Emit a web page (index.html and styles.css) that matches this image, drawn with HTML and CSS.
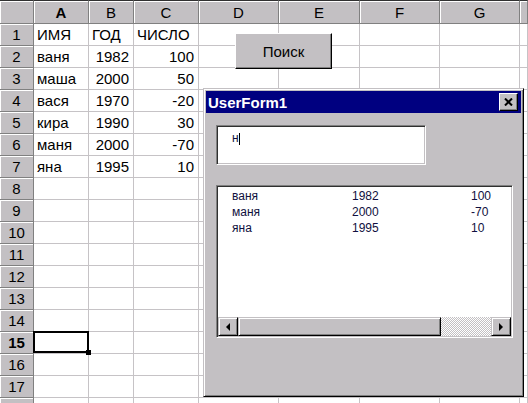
FILE: index.html
```html
<!DOCTYPE html>
<html>
<head>
<meta charset="utf-8">
<link rel="stylesheet" href="styles.css">
</head>
<body>
<div class="sheet">
  <div class="h corner"></div><div class="h col sel">A</div><div class="h col">B</div><div class="h col">C</div><div class="h col">D</div><div class="h col">E</div><div class="h col">F</div><div class="h col">G</div><div class="h col"></div>

  <div class="h rh">1</div><div class="c">ИМЯ</div><div class="c">ГОД</div><div class="c">ЧИСЛО</div><div class="c"></div><div class="c"></div><div class="c"></div><div class="c"></div><div class="c"></div>
  <div class="h rh">2</div><div class="c">ваня</div><div class="c n">1982</div><div class="c n">100</div><div class="c"></div><div class="c"></div><div class="c"></div><div class="c"></div><div class="c"></div>
  <div class="h rh">3</div><div class="c">маша</div><div class="c n">2000</div><div class="c n">50</div><div class="c"></div><div class="c"></div><div class="c"></div><div class="c"></div><div class="c"></div>
  <div class="h rh">4</div><div class="c">вася</div><div class="c n">1970</div><div class="c n">-20</div><div class="c"></div><div class="c"></div><div class="c"></div><div class="c"></div><div class="c"></div>
  <div class="h rh">5</div><div class="c">кира</div><div class="c n">1990</div><div class="c n">30</div><div class="c"></div><div class="c"></div><div class="c"></div><div class="c"></div><div class="c"></div>
  <div class="h rh">6</div><div class="c">маня</div><div class="c n">2000</div><div class="c n">-70</div><div class="c"></div><div class="c"></div><div class="c"></div><div class="c"></div><div class="c"></div>
  <div class="h rh">7</div><div class="c">яна</div><div class="c n">1995</div><div class="c n">10</div><div class="c"></div><div class="c"></div><div class="c"></div><div class="c"></div><div class="c"></div>
  <div class="h rh">8</div><div class="c"></div><div class="c"></div><div class="c"></div><div class="c"></div><div class="c"></div><div class="c"></div><div class="c"></div><div class="c"></div>
  <div class="h rh">9</div><div class="c"></div><div class="c"></div><div class="c"></div><div class="c"></div><div class="c"></div><div class="c"></div><div class="c"></div><div class="c"></div>
  <div class="h rh">10</div><div class="c"></div><div class="c"></div><div class="c"></div><div class="c"></div><div class="c"></div><div class="c"></div><div class="c"></div><div class="c"></div>
  <div class="h rh">11</div><div class="c"></div><div class="c"></div><div class="c"></div><div class="c"></div><div class="c"></div><div class="c"></div><div class="c"></div><div class="c"></div>
  <div class="h rh">12</div><div class="c"></div><div class="c"></div><div class="c"></div><div class="c"></div><div class="c"></div><div class="c"></div><div class="c"></div><div class="c"></div>
  <div class="h rh">13</div><div class="c"></div><div class="c"></div><div class="c"></div><div class="c"></div><div class="c"></div><div class="c"></div><div class="c"></div><div class="c"></div>
  <div class="h rh">14</div><div class="c"></div><div class="c"></div><div class="c"></div><div class="c"></div><div class="c"></div><div class="c"></div><div class="c"></div><div class="c"></div>
  <div class="h rh sel">15</div><div class="c active"><span class="handle"></span></div><div class="c"></div><div class="c"></div><div class="c"></div><div class="c"></div><div class="c"></div><div class="c"></div><div class="c"></div>
  <div class="h rh">16</div><div class="c"></div><div class="c"></div><div class="c"></div><div class="c"></div><div class="c"></div><div class="c"></div><div class="c"></div><div class="c"></div>
  <div class="h rh">17</div><div class="c"></div><div class="c"></div><div class="c"></div><div class="c"></div><div class="c"></div><div class="c"></div><div class="c"></div><div class="c"></div>
  <div class="h rh"></div><div class="c"></div><div class="c"></div><div class="c"></div><div class="c"></div><div class="c"></div><div class="c"></div><div class="c"></div><div class="c"></div>
</div>

<button class="search-btn">Поиск</button>

<div class="form">
  <div class="titlebar">
    <span class="title">UserForm1</span>
    <span class="close">
      <svg width="9" height="8" viewBox="0 0 9 8"><path d="M1 0.5 L8 7.5 M8 0.5 L1 7.5" stroke="#000" stroke-width="2" fill="none"/></svg>
    </span>
  </div>
  <div class="client">
    <div class="textbox">н<span class="caret"></span></div>
    <div class="listbox">
      <div class="items">
        <div class="item"><span>ваня</span><span>1982</span><span>100</span></div>
        <div class="item"><span>маня</span><span>2000</span><span>-70</span></div>
        <div class="item"><span>яна</span><span>1995</span><span>10</span></div>
      </div>
      <div class="hscroll">
        <div class="sbtn"><span class="arr-left"></span></div>
        <div class="thumb"></div>
        <div class="track"></div>
        <div class="sbtn"><span class="arr-right"></span></div>
      </div>
    </div>
  </div>
</div>
</body>
</html>
```

FILE: styles.css
```css
* { box-sizing: border-box; }

body {
  margin: 0;
  width: 528px;
  height: 403px;
  overflow: hidden;
  position: relative;
  background: #fff;
  font-family: "Liberation Sans", Arial, sans-serif;
  color: #000;
}

.sheet {
  display: grid;
  grid-template-columns: 34px 55px 45px 65px 80px 81px 80px 80px 8px;
  grid-template-rows: 24px;
  grid-auto-rows: 22px;
}

.h {
  background: #c3c0c3;
  border-right: 1px solid #808080;
  border-bottom: 1px solid #808080;
  box-shadow: inset 1px 1px #fff;
  display: flex;
  align-items: center;
  justify-content: center;
  font-size: 15px;
}

.corner, .col { border-top: 1px solid #303030; }

.sel { font-weight: bold; }

.c {
  border-right: 1px solid #c6c3c6;
  border-bottom: 1px solid #c6c3c6;
  font-size: 15px;
  padding: 0 3px;
  display: flex;
  align-items: center;
  white-space: nowrap;
}

.n {
  justify-content: flex-end;
  padding-right: 4px;
}

.active { position: relative; }

.active::before {
  content: "";
  position: absolute;
  left: -1px;
  top: -1px;
  right: -1px;
  bottom: 0;
  border: 2px solid #000;
}

.handle {
  position: absolute;
  right: -3px;
  bottom: -2px;
  width: 5px;
  height: 5px;
  background: #000;
}

.search-btn {
  position: absolute;
  left: 235px;
  top: 33px;
  width: 97px;
  height: 36px;
  margin: 0;
  padding: 0;
  background: #c3c0c3;
  border: 1px solid;
  border-color: #fff #000 #000 #fff;
  box-shadow: inset -1px -1px #808080;
  font-family: "Liberation Sans", Arial, sans-serif;
  font-size: 15px;
  color: #000;
}

.form {
  position: absolute;
  left: 203px;
  top: 88px;
  width: 321px;
  height: 309px;
  background: #c3c0c3;
  border: 1px solid;
  border-color: #c3c0c3 #000 #000 #c3c0c3;
  box-shadow: inset 1px 1px #fff, inset -1px -1px #808080;
  padding: 2px;
  display: flex;
  flex-direction: column;
}

.titlebar {
  height: 22px;
  background: #000080;
  color: #fff;
  display: flex;
  align-items: center;
  justify-content: space-between;
  padding: 0 3px 0 2px;
}

.title {
  font-weight: bold;
  font-size: 15px;
}

.close {
  width: 19px;
  height: 18px;
  background: #c3c0c3;
  border: 1px solid;
  border-color: #fff #000 #000 #fff;
  box-shadow: inset -1px -1px #808080;
  display: flex;
  align-items: center;
  justify-content: center;
}

.client {
  flex: 1;
  display: flex;
  flex-direction: column;
  padding: 12px 0 0 10px;
}

.textbox {
  width: 210px;
  height: 40px;
  background: #fff;
  border: 1px solid;
  border-color: #808080 #fff #fff #808080;
  box-shadow: inset 1px 1px #303030, inset -1px -1px #c3c0c3;
  padding: 5px 0 0 15px;
  font-size: 12px;
  line-height: 14px;
  color: #101040;
}

.caret {
  display: inline-block;
  width: 1px;
  height: 12px;
  background: #000;
  vertical-align: -3px;
}

.listbox {
  margin-top: 20px;
  width: 297px;
  height: 153px;
  background: #fff;
  border: 1px solid;
  border-color: #808080 #fff #fff #808080;
  box-shadow: inset 1px 1px #303030, inset -1px -1px #c3c0c3;
  padding: 1px;
  display: flex;
  flex-direction: column;
}

.items {
  flex: 1;
  padding: 1px 0 0 14px;
  font-size: 12px;
  line-height: 16px;
  color: #101040;
}

.item {
  display: grid;
  grid-template-columns: 120px 119px 1fr;
}

.hscroll {
  height: 19px;
  display: flex;
}

.sbtn, .thumb {
  background: #c3c0c3;
  border: 1px solid;
  border-color: #c3c0c3 #000 #000 #c3c0c3;
  box-shadow: inset 1px 1px #fff, inset -1px -1px #808080;
}

.sbtn {
  width: 20px;
  display: flex;
  align-items: center;
  justify-content: center;
}

.thumb { width: 203px; }

.track {
  flex: 1;
  background: repeating-conic-gradient(#c3c0c3 0 25%, #fff 0 50%) 0 0 / 2px 2px;
}

.arr-left {
  width: 0;
  height: 0;
  border-right: 4px solid #000;
  border-top: 4px solid transparent;
  border-bottom: 4px solid transparent;
}

.arr-right {
  width: 0;
  height: 0;
  border-left: 4px solid #000;
  border-top: 4px solid transparent;
  border-bottom: 4px solid transparent;
}
```
